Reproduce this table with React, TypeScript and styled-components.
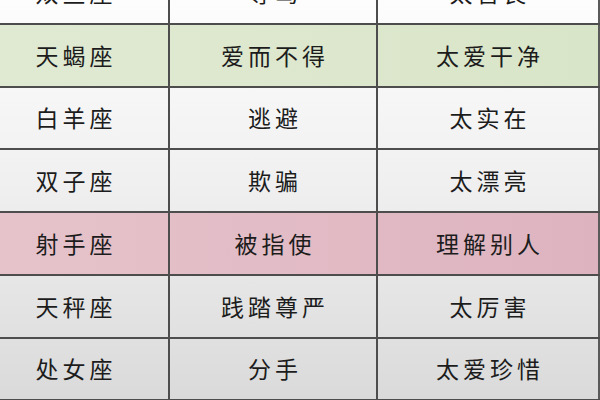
import React from "react";
import styled, { createGlobalStyle } from "styled-components";

const GlobalStyle = createGlobalStyle`
  html, body {
    margin: 0;
    padding: 0;
    width: 600px;
    height: 400px;
    overflow: hidden;
    background: #e6e6e6;
  }
`;

const Page = styled.div`
  width: 600px;
  height: 400px;
  overflow: hidden;
  background: linear-gradient(180deg, #fdfdfd 0%, #f0f0f0 45%, #dadada 100%);
  font-family: "Noto Sans CJK SC", "Noto Sans", sans-serif;
`;

const Table = styled.div`
  margin-top: -38px;
  width: 600px;
  display: flex;
  flex-direction: column;
`;

type Tone = "plain" | "green" | "pink";

const toneBg: Record<Tone, string> = {
  plain: "transparent",
  green: "linear-gradient(90deg, #e0ead3 0%, #d9e5c8 100%)",
  pink: "linear-gradient(90deg, #e6c3cb 0%, #ddb3bf 100%)",
};

const Row = styled.div<{ $tone: Tone }>`
  display: grid;
  grid-template-columns: 168px 208px 222px 2px;
  height: 62.75px;
  box-sizing: border-box;
  border-bottom: 2px solid #4d4d4d;
  background: ${(p) => toneBg[p.$tone]};
`;

const Cell = styled.div<{ $first?: boolean }>`
  display: flex;
  align-items: center;
  justify-content: center;
  box-sizing: border-box;
  border-left: ${(p) => (p.$first ? "none" : "2px solid #4d4d4d")};
  padding-right: ${(p) => (p.$first ? "20px" : "0")};
  font-size: 23px;
  letter-spacing: 4px;
  text-indent: 4px;
  color: #1c1c1c;
  line-height: 1;
`;

const Edge = styled.div`
  background: #5a5a5a;
`;

const rows: { sign: string; fear: string; hate: string; tone: Tone }[] = [
  { sign: "双鱼座", fear: "辱骂", hate: "太善良", tone: "plain" },
  { sign: "天蝎座", fear: "爱而不得", hate: "太爱干净", tone: "green" },
  { sign: "白羊座", fear: "逃避", hate: "太实在", tone: "plain" },
  { sign: "双子座", fear: "欺骗", hate: "太漂亮", tone: "plain" },
  { sign: "射手座", fear: "被指使", hate: "理解别人", tone: "pink" },
  { sign: "天秤座", fear: "践踏尊严", hate: "太厉害", tone: "plain" },
  { sign: "处女座", fear: "分手", hate: "太爱珍惜", tone: "plain" },
];

export default function App() {
  return (
    <>
      <GlobalStyle />
      <Page>
        <Table>
          {rows.map((r) => (
            <Row key={r.sign} $tone={r.tone}>
              <Cell $first>{r.sign}</Cell>
              <Cell>{r.fear}</Cell>
              <Cell>{r.hate}</Cell>
              <Edge />
            </Row>
          ))}
        </Table>
      </Page>
    </>
  );
}
